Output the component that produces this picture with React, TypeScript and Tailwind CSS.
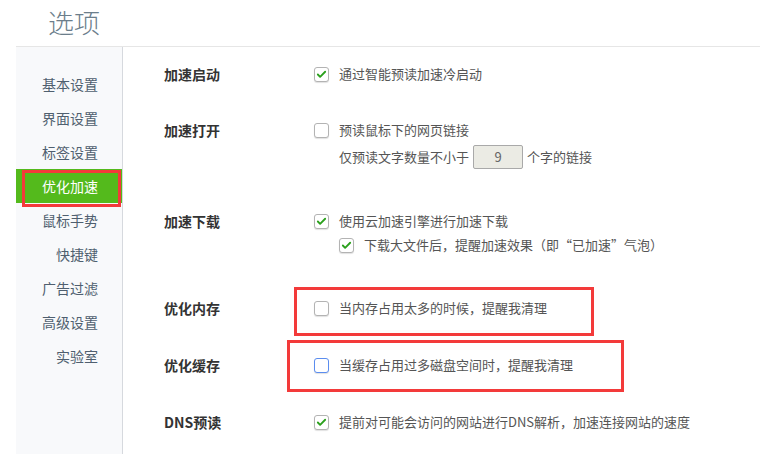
import { Check } from 'lucide-react'

const menu = ['基本设置', '界面设置', '标签设置', '优化加速', '鼠标手势', '快捷键', '广告过滤', '高级设置', '实验室']

function Box({ checked, focus }: { checked?: boolean; focus?: boolean }) {
  return (
    <span
      className={`flex h-[15px] w-[15px] shrink-0 items-center justify-center rounded-[3px] border bg-white shadow-[0_1px_1px_rgba(0,0,0,0.12)] ${
        focus ? 'border-[#5b8def]' : 'border-[#b3b3b3]'
      }`}
    >
      {checked && <Check className="h-[11px] w-[11px] text-[#2aa01c]" strokeWidth={4} />}
    </span>
  )
}

function Line({ checked, focus, text }: { checked?: boolean; focus?: boolean; text: string }) {
  return (
    <div className="flex h-6 items-center gap-[10px]">
      <Box checked={checked} focus={focus} />
      <span>{text}</span>
    </div>
  )
}

function Label({ children }: { children: string }) {
  return <div className="flex h-6 w-[150px] shrink-0 items-center text-[14px] font-bold text-[#333]">{children}</div>
}

export default function App() {
  return (
    <div
      className="relative flex h-[454px] w-[760px] flex-col overflow-hidden bg-white"
      style={{ fontFamily: '"Noto Sans CJK SC", "Noto Sans", sans-serif' }}
    >
      <div className="ml-4 h-[47px] border-b border-[#e6e6e6] pl-8 pt-[5px] text-[26px] font-light leading-[34px] text-[#6c7e8b]">
        选项
      </div>

      <div className="flex flex-1">
        <div className="ml-4 w-[107px] border-r border-[#d6d9de] bg-[#f8f9fb] pt-[20px]">
          {menu.map((m) => (
            <div
              key={m}
              className={`flex h-[34px] items-center justify-end pr-6 text-[14px] ${
                m === '优化加速' ? 'bg-[#54ba1c] text-white' : 'text-[#4f5f6f]'
              }`}
            >
              {m}
            </div>
          ))}
        </div>

        <div className="flex flex-1 flex-col pl-[41px] pt-[15px] text-[13px] text-[#555]">
          <div className="flex">
            <Label>加速启动</Label>
            <Line checked text="通过智能预读加速冷启动" />
          </div>

          <div className="mt-[32px] flex">
            <Label>加速打开</Label>
            <div className="flex flex-col gap-[3px]">
              <Line text="预读鼠标下的网页链接" />
              <div className="flex h-6 items-center pl-[25px]">
                <span>仅预读文字数量不小于</span>
                <span className="mx-[4px] flex h-6 w-[50px] items-center justify-center rounded-[2px] border border-[#a9a9a9] bg-[#ebebe4] text-[#666]">
                  9
                </span>
                <span>个字的链接</span>
              </div>
            </div>
          </div>

          <div className="mt-[40px] flex">
            <Label>加速下载</Label>
            <div className="flex flex-col">
              <Line checked text="使用云加速引擎进行加速下载" />
              <div className="pl-[25px]">
                <Line checked text="下载大文件后，提醒加速效果（即“已加速”气泡）" />
              </div>
            </div>
          </div>

          <div className="mt-[39px] flex">
            <Label>优化内存</Label>
            <Line text="当内存占用太多的时候，提醒我清理" />
          </div>

          <div className="mt-[33px] flex">
            <Label>优化缓存</Label>
            <Line focus text="当缓存占用过多磁盘空间时，提醒我清理" />
          </div>

          <div className="mt-[33px] flex">
            <Label>DNS预读</Label>
            <Line checked text="提前对可能会访问的网站进行DNS解析，加速连接网站的速度" />
          </div>
        </div>
      </div>

      {/* annotation boxes */}
      <div className="pointer-events-none absolute left-[22px] top-[170px] h-[37px] w-[99px] border-[3px] border-[#f33a3a]" />
      <div className="pointer-events-none absolute left-[294px] top-[287px] h-[49px] w-[300px] border-[3px] border-[#f33a3a]" />
      <div className="pointer-events-none absolute left-[287px] top-[340px] h-[52px] w-[337px] border-[3px] border-[#f33a3a]" />
    </div>
  )
}
